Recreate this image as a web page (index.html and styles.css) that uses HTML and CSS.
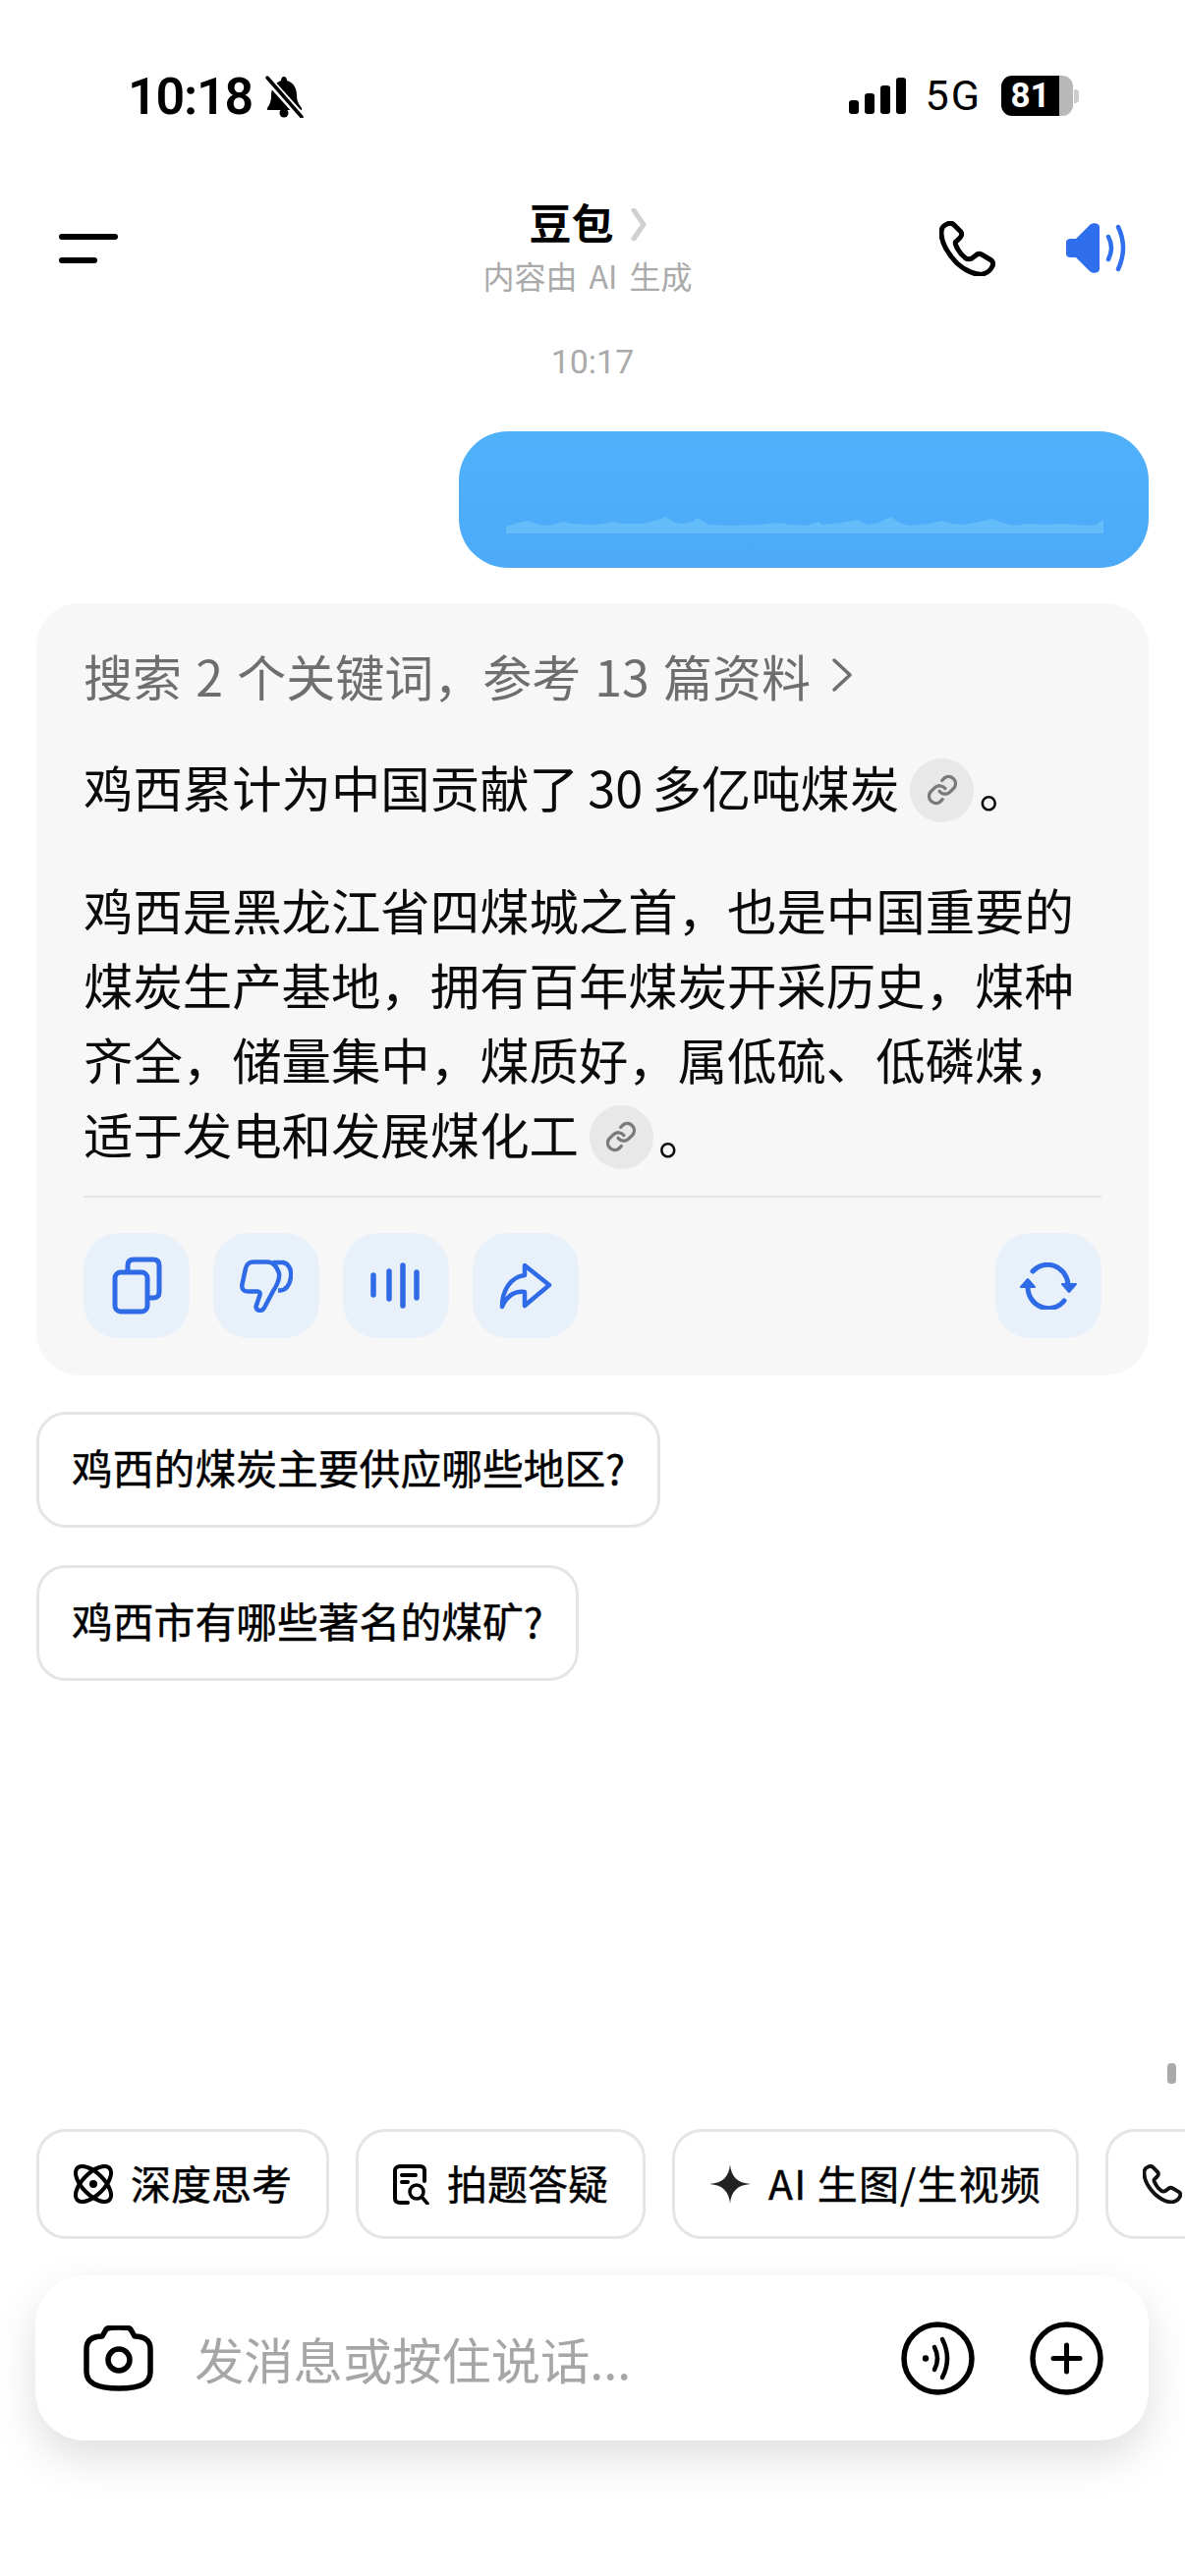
FILE: index.html
```html
<!DOCTYPE html>
<html lang="zh-CN">
<head>
  <meta charset="UTF-8">
  <title>豆包</title>
  <link rel="stylesheet" href="styles.css">
</head>
<body>
  <div class="page">
    <div class="status-bar">
      <div class="status-left">
        <span class="clock">10:18</span>
        <svg class="bell" viewBox="0 0 41 43" width="41" height="43">
          <path d="M20 1C22 1 23 3 23 5C30 7 33 13 33 20C33 27 36 30 38 33V35H3V33C5 30 7 27 7 20C7 13 11 7 17 5C17 3 18 1 20 1Z" fill="#000"/>
          <circle cx="20" cy="38" r="4.5" fill="#000"/>
          <path d="M2 2L38 42" stroke="#fff" stroke-width="8"/>
          <path d="M3 2L38 42" stroke="#000" stroke-width="3.5" stroke-linecap="round"/>
        </svg>
      </div>
      <div class="status-right">
        <div class="signal">
          <i class="bar bar-1"></i><i class="bar bar-2"></i><i class="bar bar-3"></i><i class="bar bar-4"></i>
        </div>
        <span class="network">5G</span>
        <div class="battery"><span class="battery-fill">81</span><span class="battery-rest"></span></div>
        <i class="battery-nub"></i>
      </div>
    </div>

    <div class="nav">
      <div class="menu"><i class="menu-long"></i><i class="menu-short"></i></div>
      <div class="nav-title">
        <div class="title-row">
          <span class="title">豆包</span>
          <svg viewBox="0 0 16 33" width="16" height="33"><path d="M3 2L13 16.500L3 31" fill="none" stroke="#d0d0d0" stroke-width="5" stroke-linecap="round" stroke-linejoin="round"/></svg>
        </div>
        <div class="subtitle">内容由 AI 生成</div>
      </div>
      <div class="nav-actions">
        <svg viewBox="0 0 57 56" width="57" height="56"><path d="M8 3C5 4 2 7 2 12C2 22 9 34 18 43C27 51 37 55 44 54C49 53 52 50 54 46C55 44 55 42 53 40L43 34C41 33 39 33 37 35L33 38C31 39 29 39 27 38C23 35 19 30 17 25C16 23 16 21 18 20L21 17C23 15 23 13 22 11L15 4C13 2 10 2 8 3Z" fill="none" stroke="#000" stroke-width="5" stroke-linejoin="round"/></svg>
        <svg viewBox="0 0 63 51" width="63" height="51">
          <path d="M0 20C0 17 2 16 5 16H10L24 2C27 -1 34 0 34 4V47C34 51 27 52 24 49L10 35H5C2 35 0 34 0 31Z" fill="#2f6fed"/>
          <path d="M43 14Q49 25 43 37M53 4Q63 25 53 47" fill="none" stroke="#2f6fed" stroke-width="4.500" stroke-linecap="round"/>
        </svg>
      </div>
    </div>

    <div class="timestamp">10:17</div>

    <div class="bubble-row">
      <div class="bubble">
        <svg viewBox="0 0 608 18" width="608" height="18"><path d="M0 18V11L12 7L22 5L34 9L44 10L58 6L66 8L90 9L104 7L110 6L118 8L140 8L158 3L162 1L170 6L178 8L190 6L194 3L198 4L206 9L230 10L260 9L274 7L290 9L306 10L318 6L322 9L340 7L358 4L368 9L376 8L388 3L392 1L400 7L410 10L430 8L444 5L454 8L466 9L482 6L494 3L508 8L520 10L530 8L550 9L565 8L580 9L590 10L600 9L608 4V18Z" fill="#64bcf8"/></svg>
      </div>
    </div>

    <div class="answer-card">
      <div class="search-line">搜索 2 个关键词，参考 13 篇资料
        <svg viewBox="0 0 24 36" width="24" height="36"><path d="M4 3L20 18L4 33" fill="none" stroke="#6e6e6e" stroke-width="3.500" stroke-linecap="round" stroke-linejoin="round"/></svg>
      </div>
      <p class="answer-text first">鸡西累计为中国贡献了 30 多亿吨煤炭<span class="link-pill"><svg viewBox="0 0 24 24" width="34" height="34"><path d="M10 13a5 5 0 0 0 7.500.5l3-3a5 5 0 0 0-7-7l-1.700 1.700M14 11a5 5 0 0 0-7.500-.5l-3 3a5 5 0 0 0 7 7l1.700-1.700" fill="none" stroke="#7a7a7a" stroke-width="2.400" stroke-linecap="round"/></svg></span>。</p>
      <p class="answer-text">鸡西是黑龙江省四煤城之首，也是中国重要的煤炭生产基地，拥有百年煤炭开采历史，煤种齐全，储量集中，煤质好，属低硫、低磷煤，适于发电和发展煤化工<span class="link-pill"><svg viewBox="0 0 24 24" width="34" height="34"><path d="M10 13a5 5 0 0 0 7.500.5l3-3a5 5 0 0 0-7-7l-1.700 1.700M14 11a5 5 0 0 0-7.500-.5l-3 3a5 5 0 0 0 7 7l1.700-1.700" fill="none" stroke="#7a7a7a" stroke-width="2.400" stroke-linecap="round"/></svg></span>。</p>
      <div class="card-actions">
        <button class="action">
          <svg viewBox="0 0 108 107" width="108" height="107">
            <path d="M45 38V33C45 29 47 27 51 27H71C75 27 77 29 77 33V60C77 64 75 66 71 66H66" fill="none" stroke="#2f6be6" stroke-width="5"/>
            <rect x="32" y="40" width="33" height="40" rx="6" fill="none" stroke="#2f6be6" stroke-width="5"/>
          </svg>
        </button>
        <button class="action">
          <svg viewBox="0 0 54 54" width="54" height="54">
            <path d="M14 2.500H28C34 2.500 38 8 40 14C41 20 38 26 34 32L25 49C23 53 17 53 16.500 48L20.500 36C21 33.500 20 32.500 18 32.500H8C4 32.500 1.500 30 2.500 25L6 9C7 5 10 2.500 14 2.500Z" fill="none" stroke="#2f6be6" stroke-width="4.500" stroke-linejoin="round"/>
            <path d="M34 3H44C50 4 53 11 52 18C51 26 47 32 39 31.500" fill="none" stroke="#2f6be6" stroke-width="4.500"/>
          </svg>
        </button>
        <button class="action">
          <svg viewBox="0 0 108 107" width="108" height="107">
            <path d="M31 43V63M47 39V67M61 33V74M75 40V66" fill="none" stroke="#2f6be6" stroke-width="5.500" stroke-linecap="round"/>
          </svg>
        </button>
        <button class="action">
          <svg viewBox="0 0 54 48" width="54" height="48">
            <path d="M26 3L51 23L26 44V30C16 29 8 34 3 45C3 29 11 15 26 13Z" fill="none" stroke="#2f6be6" stroke-width="4.500" stroke-linejoin="round"/>
          </svg>
        </button>
        <button class="action regen">
          <svg viewBox="0 0 58 48" width="58" height="48">
            <path d="M13 9A21 22 0 0 1 49 22M45 39A21 22 0 0 1 8 25" fill="none" stroke="#2f6be6" stroke-width="5" stroke-linecap="round"/>
            <path d="M43 22H57L50 30ZM1 25H15L8 17Z" fill="#2f6be6" stroke="#2f6be6" stroke-width="2" stroke-linejoin="round"/>
          </svg>
        </button>
      </div>
    </div>

    <div class="suggest-list">
      <div class="suggest">鸡西的煤炭主要供应哪些地区?</div>
      <div class="suggest">鸡西市有哪些著名的煤矿?</div>
    </div>

    <div class="bottom">
      <i class="scroll-thumb"></i>
      <div class="quick-row">
        <div class="quick">
          <svg viewBox="0 0 40 40" width="40" height="40">
            <ellipse cx="20" cy="20" rx="23" ry="11" transform="rotate(45 20 20)" fill="none" stroke="#000" stroke-width="4"/>
            <ellipse cx="20" cy="20" rx="23" ry="11" transform="rotate(-45 20 20)" fill="none" stroke="#000" stroke-width="4"/>
            <circle cx="20" cy="20" r="4" fill="#000"/>
          </svg>
          <span>深度思考</span>
        </div>
        <div class="quick">
          <svg viewBox="0 0 37 41" width="37" height="41">
            <path d="M32 17V6C32 3.500 30 2 28 2H7C4 2 2 4 2 6V35C2 37.500 4 39 7 39H15M9 11H23M9 18H15" fill="none" stroke="#000" stroke-width="4" stroke-linecap="round"/>
            <circle cx="24" cy="28" r="7" fill="none" stroke="#000" stroke-width="3.500"/>
            <path d="M29.500 33.500L35 40" stroke="#000" stroke-width="3.500" stroke-linecap="round"/>
          </svg>
          <span>拍题答疑</span>
        </div>
        <div class="quick quick-wide">
          <svg viewBox="0 0 42 40" width="42" height="40"><path d="M21 0C22 12 28 19 42 20C28 21 22 28 21 40C20 28 14 21 0 20C14 19 20 12 21 0Z" fill="#222"/></svg>
          <span>AI 生图/生视频</span>
        </div>
        <div class="quick quick-call">
          <svg viewBox="0 0 57 56" width="40" height="40"><path d="M8 3C5 4 2 7 2 12C2 22 9 34 18 43C27 51 37 55 44 54C49 53 52 50 54 46C55 44 55 42 53 40L43 34C41 33 39 33 37 35L33 38C31 39 29 39 27 38C23 35 19 30 17 25C16 23 16 21 18 20L21 17C23 15 23 13 22 11L15 4C13 2 10 2 8 3Z" fill="none" stroke="#111" stroke-width="5.500" stroke-linejoin="round"/></svg>
        </div>
      </div>

      <div class="input-card">
        <svg viewBox="0 0 71 67" width="71" height="67">
          <path d="M23 4C25 2 28 2 36 2C44 2 46 2 48 4L52 11C60 11 68 14 68 24V47C68 58 60 64 36 64C12 64 3 58 3 47V24C3 14 10 11 19 11Z" fill="none" stroke="#000" stroke-width="5.500" stroke-linejoin="round"/>
          <circle cx="36" cy="35" r="11" fill="none" stroke="#000" stroke-width="5.500"/>
        </svg>
        <span class="placeholder">发消息或按住说话...</span>
        <svg viewBox="0 0 75 75" width="75" height="75">
          <circle cx="37.500" cy="37.500" r="34.500" fill="none" stroke="#000" stroke-width="5.500"/>
          <circle cx="25" cy="37.500" r="3.200" fill="#000"/>
          <path d="M34 26Q40 37.500 34 49M42 18Q52 37.500 42 57" fill="none" stroke="#000" stroke-width="4.500" stroke-linecap="round"/>
        </svg>
        <svg viewBox="0 0 75 75" width="75" height="75">
          <circle cx="37.500" cy="37.500" r="34.500" fill="none" stroke="#000" stroke-width="5.500"/>
          <path d="M24 37.500H51M37.500 24V51" fill="none" stroke="#000" stroke-width="5" stroke-linecap="round"/>
        </svg>
      </div>
    </div>
  </div>
</body>
</html>
```

FILE: styles.css
```css
* {
  margin: 0;
  padding: 0;
  box-sizing: border-box;
}

body {
  background: #fff;
  font-family: "Noto Sans CJK SC", "Noto Sans", sans-serif;
  color: #000;
}

svg {
  display: block;
  flex-shrink: 0;
}

.page {
  width: 1206px;
  height: 2622px;
  display: flex;
  flex-direction: column;
  overflow: hidden;
}

/* status bar */
.status-bar {
  height: 200px;
  padding: 77px 108px 0 130px;
  display: flex;
  justify-content: space-between;
  align-items: flex-start;
}

.status-left {
  display: flex;
  align-items: center;
  gap: 12px;
  height: 43px;
}

.clock {
  font-family: Roboto, sans-serif;
  font-size: 52px;
  font-weight: 600;
  line-height: 43px;
  letter-spacing: -1.200px;
}

.status-right {
  display: flex;
  align-items: center;
  height: 41px;
}

.signal {
  display: flex;
  align-items: flex-end;
  gap: 6px;
  height: 37px;
  margin-right: 20px;
}

.bar {
  width: 10px;
  background: #000;
  border-radius: 3px;
}

.bar-1 { height: 14px; }
.bar-2 { height: 21px; }
.bar-3 { height: 29px; }
.bar-4 { height: 37px; }

.network {
  font-family: Roboto, sans-serif;
  font-size: 43px;
  font-weight: 400;
  line-height: 41px;
  letter-spacing: 2px;
  margin-right: 20px;
}

.battery {
  width: 73px;
  height: 41px;
  display: flex;
  border-radius: 11px;
  overflow: hidden;
}

.battery-fill {
  width: 59px;
  background: #000;
  color: #fff;
  font-family: Roboto, sans-serif;
  font-size: 35px;
  font-weight: 700;
  line-height: 41px;
  text-align: center;
}

.battery-rest {
  flex: 1;
  background: #b8b8b8;
}

.battery-nub {
  width: 5px;
  height: 14px;
  margin-left: 1px;
  background: #ccc;
  border-radius: 0 4px 4px 0;
}

/* nav */
.nav {
  height: 105px;
  padding-left: 60px;
  display: grid;
  grid-template-columns: 432px 212px 1fr;
  align-items: center;
}

.menu {
  display: flex;
  flex-direction: column;
  gap: 18px;
  width: 60px;
}

.menu i {
  height: 6px;
  background: #000;
  border-radius: 3px;
}

.menu-long { width: 60px; }
.menu-short { width: 39px; }

.nav-title {
  display: flex;
  flex-direction: column;
  align-items: center;
}

.title-row {
  display: flex;
  align-items: center;
  gap: 17px;
  height: 52px;
  margin-bottom: 3px;
}

.title {
  font-size: 43px;
  font-weight: 700;
  line-height: 52px;
  margin-bottom: 6px;
}

.subtitle {
  font-size: 32px;
  line-height: 46px;
  word-spacing: 5px;
  color: #aaa;
  white-space: nowrap;
}

.nav-actions {
  padding-left: 252px;
  display: flex;
  align-items: center;
  gap: 72px;
}

.timestamp {
  margin-top: 40px;
  height: 46px;
  font-family: Roboto, sans-serif;
  font-size: 34px;
  line-height: 46px;
  color: #aaa;
  text-align: center;
}

/* user bubble */
.bubble-row {
  margin-top: 48px;
  padding-right: 37px;
  display: flex;
  justify-content: flex-end;
}

.bubble {
  width: 702px;
  height: 139px;
  padding: 0 0 35px 48px;
  display: flex;
  align-items: flex-end;
  border-radius: 50px;
  background: linear-gradient(#50b1fb, #4caaf8);
}

/* answer card */
.answer-card {
  margin: 36px 37px 0 37px;
  height: 786px;
  padding: 35px 48px 37px 48px;
  background: #f7f7f7;
  border-radius: 44px;
}

.search-line {
  display: flex;
  align-items: center;
  gap: 20px;
  font-size: 50px;
  line-height: 76px;
  word-spacing: 3px;
  color: #6e6e6e;
  white-space: nowrap;
}

.answer-text {
  margin-top: 49px;
  font-size: 50.400px;
  line-height: 76px;
  color: #0a0a0a;
}

.answer-text.first {
  margin-top: 38px;
  word-spacing: -2px;
}

.link-pill {
  display: inline-flex;
  align-items: center;
  justify-content: center;
  width: 65px;
  height: 65px;
  margin: 0 5px 0 11px;
  background: #e8e8e8;
  border-radius: 50%;
  vertical-align: 1px;
}

.card-actions {
  margin-top: 25px;
  padding-top: 36px;
  border-top: 2px solid #e4e4e4;
  display: flex;
  gap: 24px;
}

.action {
  width: 108px;
  height: 107px;
  display: flex;
  align-items: center;
  justify-content: center;
  background: #e8f0fa;
  border: none;
  border-radius: 36px;
}

.regen {
  margin-left: auto;
}

/* suggestions */
.suggest-list {
  margin: 37px 0 0 37px;
  display: flex;
  flex-direction: column;
  align-items: flex-start;
  gap: 38px;
}

.suggest {
  height: 118px;
  padding: 0 33px;
  border: 3px solid #e5e5e5;
  border-radius: 30px;
  font-size: 41.800px;
  line-height: 106px;
  -webkit-text-stroke: 0.400px #000;
  color: #000;
}

/* bottom bar */
.bottom {
  position: relative;
  margin-top: auto;
  padding-bottom: 138px;
}

.scroll-thumb {
  position: absolute;
  top: -67px;
  right: 9px;
  width: 9px;
  height: 21px;
  background: #aaa;
  border-radius: 4px;
}

.quick-row {
  padding-left: 37px;
  display: flex;
  gap: 27px;
  overflow: hidden;
}

.quick {
  height: 112px;
  padding: 0 35px;
  display: flex;
  align-items: center;
  gap: 18px;
  flex-shrink: 0;
  border: 3px solid #e5e5e5;
  border-radius: 30px;
  font-size: 41px;
  -webkit-text-stroke: 0.400px #000;
  white-space: nowrap;
}

.quick span {
  padding-bottom: 5px;
}

.quick-wide {
  letter-spacing: 1.200px;
}

.quick-call {
  width: 200px;
}

.input-card {
  margin: 37px 37px 0 36px;
  height: 168px;
  padding: 0 46px 0 49px;
  display: flex;
  align-items: center;
  gap: 0;
  background: #fff;
  border-radius: 50px;
  box-shadow: 0 18px 44px rgba(0, 0, 0, 0.13);
}

.placeholder {
  flex: 1;
  margin-left: 42px;
  font-size: 50.300px;
  color: #a6a6a6;
}

.input-card svg:last-child {
  margin-left: 56px;
}
```
